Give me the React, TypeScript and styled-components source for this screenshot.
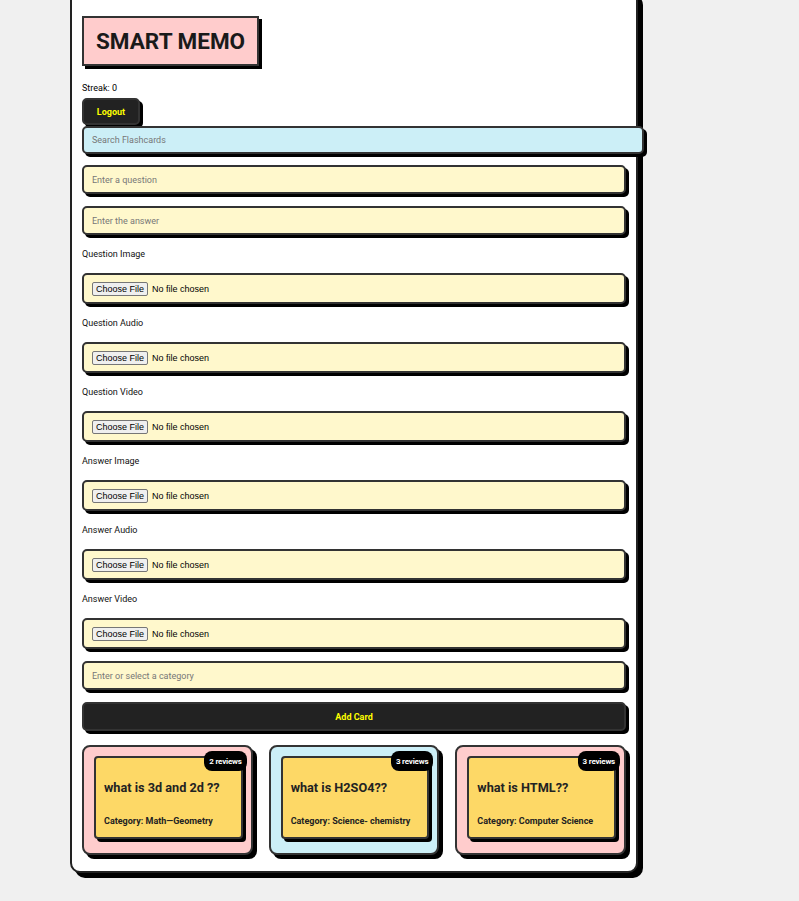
import React from "react";
import styled, { createGlobalStyle } from "styled-components";

const Global = createGlobalStyle`
  html, body { margin: 0; padding: 0; background: #f0f0f0; }
  body { font-family: Roboto, "Liberation Sans", Arial, sans-serif; color: #111; }
  * { box-sizing: border-box; }
`;

const Page = styled.div`
  padding-bottom: 22px;
`;

const Container = styled.div`
  width: 568px;
  margin: -10px 0 0 70px;
  background: #fff;
  border: 2px solid #222;
  border-radius: 10px;
  box-shadow: 5px 5px 0 #000;
  padding: 24px 10px 16px 10px;
  display: flex;
  flex-direction: column;
`;

const TitleBox = styled.h1`
  align-self: flex-start;
  margin: 0;
  height: 50px;
  display: flex;
  align-items: center;
  padding: 0 12px;
  white-space: nowrap;
  background: #ffcccc;
  border: 2px solid #333;
  box-shadow: 3px 3px 0 #000;
  font-size: 22.5px;
  font-weight: 700;
  color: #1a1a1a;
`;

const Streak = styled.div`
  margin-top: 16px;
  font-size: 9px;
  line-height: 12px;
  color: #000;
`;

const DarkButton = styled.button<{ $full?: boolean }>`
  height: ${(p) => (p.$full ? "29px" : "27px")};
  width: ${(p) => (p.$full ? "100%" : "58px")};
  align-self: flex-start;
  background: #222;
  color: #ffff00;
  border: 2px solid #333;
  border-radius: 5px;
  box-shadow: 3px 3px 0 #000;
  font-family: Roboto, sans-serif;
  font-weight: 700;
  font-size: 9px;
  padding: 0;
  cursor: pointer;
`;

const LogoutButton = styled(DarkButton)`
  margin-top: 4px;
  position: relative;
  z-index: 0;
`;

const Form = styled.div`
  margin-top: 1px;
  display: flex;
  flex-direction: column;
  gap: 12px;
`;

const TextInput = styled.input<{ $tone: "blue" | "yellow"; $wide?: boolean }>`
  height: ${(p) => (p.$tone === "blue" ? "28px" : "29px")};
  width: ${(p) => (p.$wide ? "calc(100% + 18px)" : "100%")};
  position: relative;
  z-index: 1;
  background: ${(p) => (p.$tone === "blue" ? "#cceff7" : "#fff8cc")};
  border: 2px solid #333;
  border-radius: 5px;
  box-shadow: 3px 3px 0 #000;
  padding: 0 8px;
  font-family: Roboto, sans-serif;
  font-size: 9px;
  color: #222;
  outline: none;
  &::placeholder { color: #777; }
`;

const SearchInput = styled(TextInput)`
  margin-bottom: -1px;
`;

const FieldLabel = styled.label`
  font-size: 9px;
  line-height: 14px;
  color: #111;
`;

const FileBox = styled.div`
  height: 31px;
  background: #fff8cc;
  border: 2px solid #333;
  border-radius: 5px;
  box-shadow: 3px 3px 0 #000;
  display: flex;
  align-items: center;
  padding: 0 8px;
`;

const FileInput = styled.input`
  font-family: "Liberation Sans", Arial, sans-serif;
  font-size: 9px;
  color: #000;
  &::file-selector-button {
    font-family: "Liberation Sans", Arial, sans-serif;
    font-size: 9px;
    color: #000;
    background: #efefef;
    border: 1px solid #767676;
    border-radius: 2px;
    padding: 1px 3px;
    margin-right: 4px;
  }
`;

const CardGrid = styled.div`
  margin-top: 2px;
  display: grid;
  grid-template-columns: repeat(3, 1fr);
  gap: 16px;
`;

const CardOuter = styled.div<{ $bg: string }>`
  background: ${(p) => p.$bg};
  border: 2px solid #333;
  border-radius: 8px;
  box-shadow: 4px 4px 0 #000;
  padding: 9px 8px 14px 10px;
`;

const CardInner = styled.div`
  position: relative;
  background: #fdd866;
  border: 2px solid #333;
  border-radius: 4px;
  box-shadow: 3px 3px 0 #000;
  padding: 22px 8px 10px 8px;
`;

const Badge = styled.span`
  position: absolute;
  top: -7px;
  right: -6px;
  height: 20px;
  padding: 0 5px;
  display: flex;
  align-items: center;
  background: #000;
  color: #fff;
  border-radius: 8px;
  font-size: 8px;
  font-weight: 700;
  letter-spacing: -0.2px;
`;

const CardTitle = styled.h3`
  margin: 0;
  font-size: 12.7px;
  line-height: 16px;
  font-weight: 700;
  color: #222;
`;

const CardCategory = styled.p`
  margin: 19px 0 0;
  font-size: 9px;
  line-height: 12px;
  font-weight: 700;
  color: #222;
`;

const fileFields = [
  "Question Image",
  "Question Audio",
  "Question Video",
  "Answer Image",
  "Answer Audio",
  "Answer Video",
];

const cards = [
  { bg: "#ffcccc", q: "what is 3d and 2d ??", cat: "Math\u2014Geometry", reviews: 2 },
  { bg: "#cceff7", q: "what is H2SO4??", cat: "Science- chemistry", reviews: 3 },
  { bg: "#ffcccc", q: "what is HTML??", cat: "Computer Science", reviews: 3 },
];

export default function App() {
  return (
    <Page>
      <Global />
      <Container>
        <TitleBox>SMART MEMO</TitleBox>
        <Streak>Streak: 0</Streak>
        <LogoutButton>Logout</LogoutButton>
        <Form>
          <SearchInput $tone="blue" $wide placeholder="Search Flashcards" />
          <TextInput $tone="yellow" placeholder="Enter a question" />
          <TextInput $tone="yellow" placeholder="Enter the answer" />
          {fileFields.map((f) => (
            <React.Fragment key={f}>
              <FieldLabel>{f}</FieldLabel>
              <FileBox>
                <FileInput type="file" />
              </FileBox>
            </React.Fragment>
          ))}
          <TextInput $tone="yellow" placeholder="Enter or select a category" />
          <DarkButton $full>Add Card</DarkButton>
          <CardGrid>
            {cards.map((c) => (
              <CardOuter key={c.q} $bg={c.bg}>
                <CardInner>
                  <Badge>{c.reviews} reviews</Badge>
                  <CardTitle>{c.q}</CardTitle>
                  <CardCategory>Category: {c.cat}</CardCategory>
                </CardInner>
              </CardOuter>
            ))}
          </CardGrid>
        </Form>
      </Container>
    </Page>
  );
}
